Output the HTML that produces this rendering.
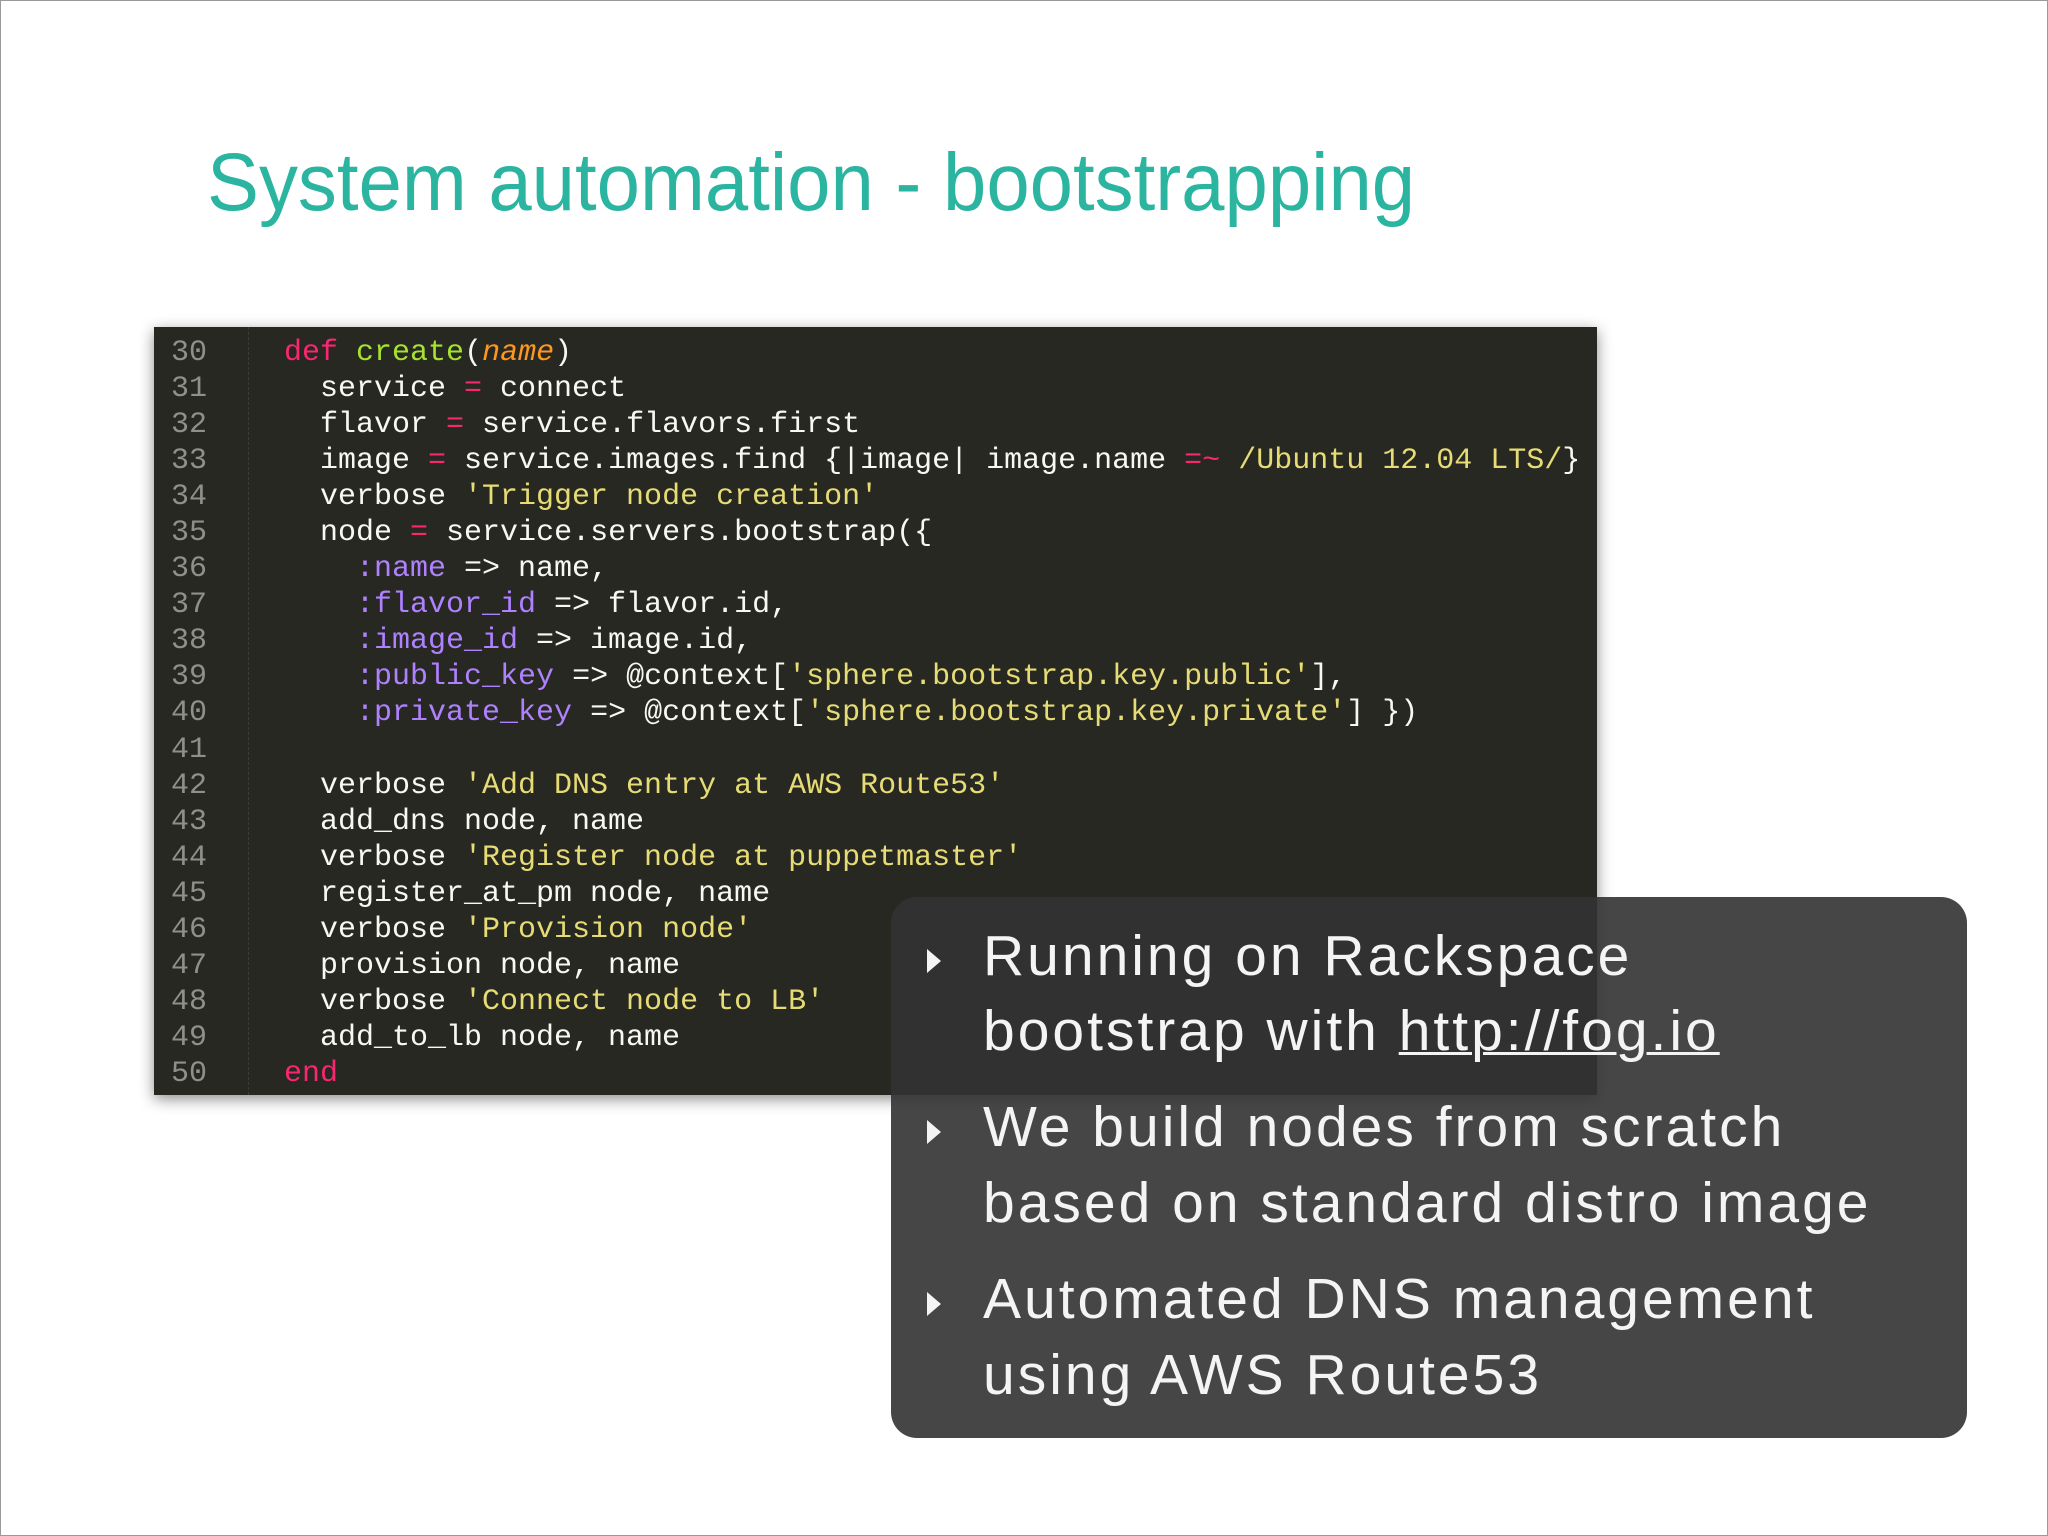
<!DOCTYPE html>
<html><head><meta charset="utf-8"><style>
html,body{margin:0;padding:0}
body{width:2048px;height:1536px;background:#fff;position:relative;overflow:hidden;box-sizing:border-box;border:1px solid #999}
.title{position:absolute;left:206px;top:132px;font-family:"Liberation Sans",sans-serif;font-size:82px;color:#2bb5a0;white-space:nowrap;transform-origin:0 0;transform:scaleX(0.95);line-height:100px}
.code{position:absolute;left:153px;top:326px;width:1443px;height:768px;background:#272822;box-shadow:0 4px 14px rgba(0,0,0,0.45)}
.gut{position:absolute;left:247px;top:326px;height:768px;border-left:1px dashed #3c3d38}
pre{margin:0;position:absolute;top:334px;font-family:"Liberation Mono",monospace;font-size:30px;line-height:36.05px;color:#f8f8f2}
.ln{left:170px;color:#8f908a}
.src{left:283px}
.k{color:#f92672}.f{color:#a6e22e}.a{color:#fd971f;font-style:italic}.s{color:#e6db74}.y{color:#ae81ff}
.box{position:absolute;left:890px;top:896px;width:1076px;height:541px;background:rgba(50,50,50,0.9);border-radius:26px}
.b{position:absolute;left:982px;font-family:"Liberation Sans",sans-serif;font-size:57px;letter-spacing:3px;color:#f4f4f4;white-space:nowrap;line-height:76px}
.b a{color:#f4f4f4;text-decoration:underline;text-decoration-thickness:3px}
.tri{position:absolute;left:926px;width:0;height:0;border-top:12px solid transparent;border-bottom:12px solid transparent;border-left:14px solid #f4f4f4}
</style></head><body>
<div class="title">System automation - bootstrapping</div>
<div class="code"></div>
<div class="gut"></div>
<pre class="ln">30
31
32
33
34
35
36
37
38
39
40
41
42
43
44
45
46
47
48
49
50</pre>
<pre class="src"><span class="k">def</span> <span class="f">create</span>(<span class="a">name</span>)
  service <span class="k">=</span> connect
  flavor <span class="k">=</span> service.flavors.first
  image <span class="k">=</span> service.images.find {|image| image.name <span class="k">=~</span> <span class="s">/Ubuntu 12.04 LTS/</span>}
  verbose <span class="s">'Trigger node creation'</span>
  node <span class="k">=</span> service.servers.bootstrap({
    <span class="y">:name</span> =&gt; name,
    <span class="y">:flavor_id</span> =&gt; flavor.id,
    <span class="y">:image_id</span> =&gt; image.id,
    <span class="y">:public_key</span> =&gt; @context[<span class="s">'sphere.bootstrap.key.public'</span>],
    <span class="y">:private_key</span> =&gt; @context[<span class="s">'sphere.bootstrap.key.private'</span>] })

  verbose <span class="s">'Add DNS entry at AWS Route53'</span>
  add_dns node, name
  verbose <span class="s">'Register node at puppetmaster'</span>
  register_at_pm node, name
  verbose <span class="s">'Provision node'</span>
  provision node, name
  verbose <span class="s">'Connect node to LB'</span>
  add_to_lb node, name
<span class="k">end</span></pre>
<div class="box"></div>
<div class="tri" style="top:948px"></div>
<div class="tri" style="top:1119px"></div>
<div class="tri" style="top:1291px"></div>
<div class="b" style="top:917px">Running on Rackspace</div>
<div class="b" style="top:992px">bootstrap with <a>http://fog.io</a></div>
<div class="b" style="top:1088px">We build nodes from scratch</div>
<div class="b" style="top:1164px">based on standard distro image</div>
<div class="b" style="top:1260px">Automated DNS management</div>
<div class="b" style="top:1336px">using AWS Route53</div>
</body></html>
